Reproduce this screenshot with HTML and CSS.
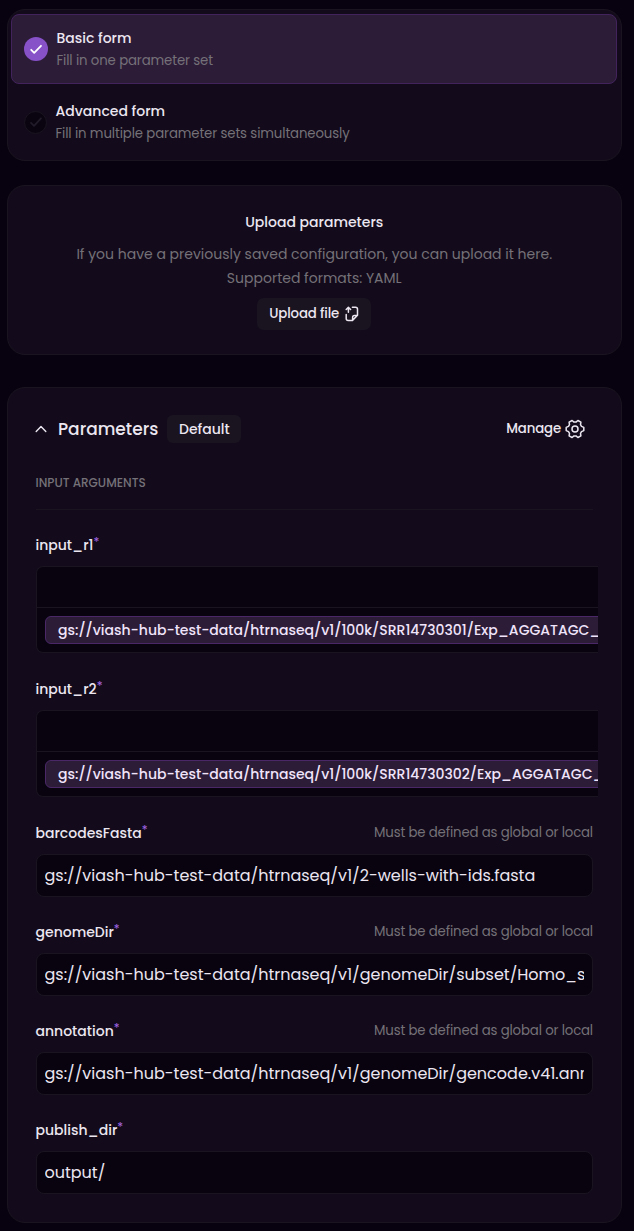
FILE: index.html
```html
<!DOCTYPE html>
<html lang="en">
<head>
<meta charset="utf-8">
<title>Parameters</title>
<link rel="stylesheet" href="styles.css">
</head>
<body>
<main class="page">
  <section class="card modes">
    <div class="mode selected">
      <span class="tick"><svg viewBox="0 0 24 24"><path d="M7.2 12.8l3 3 6.8-7"/></svg></span>
      <div class="text"><h3>Basic form</h3><p>Fill in one parameter set</p></div>
    </div>
    <div class="mode">
      <span class="tick"><svg viewBox="0 0 24 24"><path d="M7 12.8l3 3 7-7.4"/></svg></span>
      <div class="text"><h3>Advanced form</h3><p>Fill in multiple parameter sets simultaneously</p></div>
    </div>
  </section>

  <section class="card upload">
    <h3>Upload parameters</h3>
    <p>If you have a previously saved configuration, you can upload it here.<br>Supported formats: YAML</p>
    <button class="btn" type="button">Upload file
      <svg class="file-icon" viewBox="0 0 14 16"><path d="M3.4 6.3V1.7M1.2 3.5l2.2-2.1 2.2 2.1M7.4 1.2h3.1a2 2 0 0 1 2 2v6.1l-5 5.1H3.2a2 2 0 0 1-2-2V8.6M12.4 9.6H9.6a2 2 0 0 0-2 2v2.7"/></svg>
    </button>
  </section>

  <section class="card params">
    <header class="head">
      <svg class="chev" viewBox="0 0 12 8"><path d="M1.2 6.6L6 1.5l4.8 5.1"/></svg>
      <h2>Parameters</h2>
      <span class="badge">Default</span>
      <span class="manage">Manage
        <svg class="gear" viewBox="0 0 20 20"><path d="M18.8 8.4v3.2L16.5 12.6 15.5 14.3 15.9 16.8 12.9 18.5 11 16.9H9L7.1 18.5 4.1 16.8 4.5 14.3 3.5 12.6 1.2 11.6V8.4L3.5 7.4 4.5 5.7 4.1 3.2 7.1 1.5 9 3.1h2L12.9 1.5 15.9 3.2 15.5 5.7 16.5 7.4z"/><circle cx="10" cy="10" r="3"/></svg>
      </span>
    </header>
    <h4>INPUT ARGUMENTS</h4>

    <div class="field">
      <div class="label"><label>input_r1</label><i>*</i></div>
      <div class="multi"><div class="entry"></div><div class="chips"><span class="chip">gs://viash-hub-test-data/htrnaseq/v1/100k/SRR14730301/Exp_AGGATAGC_</span></div></div>
    </div>
    <div class="field">
      <div class="label"><label>input_r2</label><i>*</i></div>
      <div class="multi"><div class="entry"></div><div class="chips"><span class="chip">gs://viash-hub-test-data/htrnaseq/v1/100k/SRR14730302/Exp_AGGATAGC_</span></div></div>
    </div>
    <div class="field">
      <div class="label"><label>barcodesFasta</label><i>*</i><small>Must be defined as global or local</small></div>
      <div class="box"><div class="clip">gs://viash-hub-test-data/htrnaseq/v1/2-wells-with-ids.fasta</div></div>
    </div>
    <div class="field">
      <div class="label"><label>genomeDir</label><i>*</i><small>Must be defined as global or local</small></div>
      <div class="box"><div class="clip">gs://viash-hub-test-data/htrnaseq/v1/genomeDir/subset/Homo_s</div></div>
    </div>
    <div class="field">
      <div class="label"><label>annotation</label><i>*</i><small>Must be defined as global or local</small></div>
      <div class="box"><div class="clip">gs://viash-hub-test-data/htrnaseq/v1/genomeDir/gencode.v41.ann</div></div>
    </div>
    <div class="field">
      <div class="label"><label>publish_dir</label><i>*</i></div>
      <div class="box"><div class="clip">output/</div></div>
    </div>
  </section>
</main>
</body>
</html>
```
FILE: styles.css
```css
* { box-sizing: border-box; }
body { margin: 0; background: #080210; color: #ebe6f0; font-family: Poppins, Inter, sans-serif; font-size: 14px; }
h2, h3, h4, p { margin: 0; font-weight: 400; }
svg { fill: none; stroke: currentColor; stroke-linecap: round; stroke-linejoin: round; display: block; flex: none; }
.page { padding: 9px 12px 8px 6.5px; height: 1231px; overflow: hidden; }
.card { background: #130b1b; border: 1px solid #1a1420; border-radius: 18px; }

.modes { height: 152px; padding: 4px 4px 4px 3.5px; }
.mode { display: flex; align-items: center; gap: 8.5px; height: 70px; padding: 0 12px; border: 1px solid transparent; border-radius: 8px; }
.mode + .mode { margin-top: 3px; }
.mode.selected { background: #2d1c38; border-color: #42235c; }
.text { padding-top: 1px; }
.mode h3, .upload h3 { font-size: 14px; line-height: 23px; font-weight: 500; }
.mode p { font-size: 13.3px; letter-spacing: -0.13px; line-height: 22px; color: #757178; }
.tick { width: 24px; height: 24px; border-radius: 50%; display: flex; align-items: center; justify-content: center; background: #8751c8; color: #fff; }
.tick svg { width: 24px; height: 24px; stroke-width: 1.8; }
.mode:not(.selected) .tick { width: 23px; height: 23px; background: #0a0411; border: 1px solid #1a1420; color: #211a28; }

.upload { margin-top: 24px; height: 170px; padding-top: 25px; display: flex; flex-direction: column; align-items: center; text-align: center; }
.upload p { margin-top: 8px; font-size: 14px; line-height: 24px; color: #757178; }
.btn { margin-top: 8px; height: 32px; width: 114px; padding: 0 12px; display: flex; align-items: center; justify-content: space-between; border: 0; border-radius: 7px; background: #1a1320; color: #ebe6f0; font: 500 13.3px Poppins, Inter, sans-serif; letter-spacing: -0.13px; white-space: nowrap; }
.file-icon { width: 14px; height: 16px; stroke-width: 1.5; }

.params { margin-top: 32px; height: 836px; padding: 27px 28px 0; }
.head { display: flex; align-items: center; height: 28px; padding-right: 8px; }
.chev { width: 12px; height: 8px; stroke-width: 1.4; margin: 0 11px 0 -0.5px; }
h2 { font-size: 17px; font-weight: 500; line-height: 28px; width: 109px; white-space: nowrap; }
.badge { width: 74px; height: 28px; border-radius: 6px; background: #1a1320; display: flex; align-items: center; padding-left: 12px; font-weight: 500; }
.manage { margin-left: auto; display: flex; align-items: center; gap: 4px; font-size: 13.3px; letter-spacing: -0.13px; font-weight: 500; }
.gear { width: 20px; height: 20px; stroke-width: 1.5; }
h4 { margin-top: 27px; height: 40px; border-bottom: 1px solid #1a1420; font-size: 12px; line-height: 26px; font-weight: 500; color: #757178; }
.field { margin-top: 24px; }
.field + .field { margin-top: 25px; }
.box { margin-bottom: -1px; }
.label { display: flex; height: 32px; line-height: 22px; white-space: nowrap; }
.label label { font-size: 14px; font-weight: 500; }
.label i { font-style: normal; font-size: 12px; line-height: 16px; color: #a566e6; }
.label small { margin-left: auto; font-size: 13.3px; letter-spacing: -0.16px; line-height: 22px; color: #757178; }
.multi { width: 562px; height: 87px; border: 1px solid #1a1420; border-right: 0; border-radius: 7px 0 0 7px; background: #090310; overflow: hidden; }
.entry { height: 41px; border-bottom: 1px solid #1a1420; }
.chips { padding: 8px 0 0 8px; }
.chip { display: flex; align-items: center; width: 700px; height: 28px; padding-left: 12.5px; border: 1px solid #4a2868; border-radius: 6px; background: #2d1c38; color: #f0e4fa; font-weight: 500; white-space: nowrap; }
.box { height: 43px; padding: 0 8px; border: 1px solid #1a1420; border-radius: 8px; background: #090310; }
.clip { overflow: hidden; white-space: nowrap; font-size: 16px; line-height: 41px; }
```
